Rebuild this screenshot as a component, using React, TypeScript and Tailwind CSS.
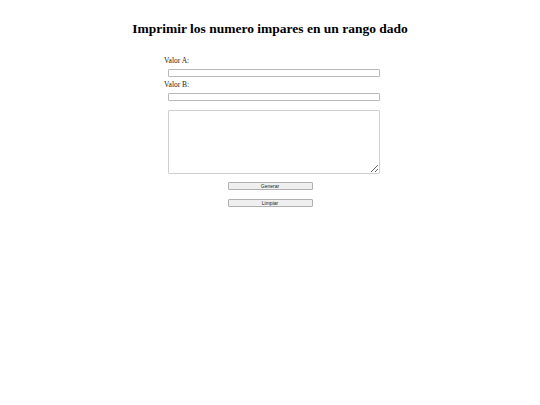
export default function App() {
  return (
    <div className="min-h-screen bg-white text-black font-['Liberation_Serif',serif] flex flex-col items-center">
      <h1 className="mt-[21px] text-[13.5px] leading-[16px] font-bold">
        Imprimir los numero impares en un rango dado
      </h1>

      <form className="mt-[20px] w-[216px] ml-[4px] flex flex-col" onSubmit={(e) => e.preventDefault()}>
        <label className="text-[7.5px] leading-[8px] text-[#222]">Valor A:</label>
        <input
          type="text"
          className="mt-[4px] ml-[4px] w-[212px] h-[8px] border border-[#b8b8b8] rounded-[1px] bg-white outline-none"
        />
        <label className="mt-[4px] text-[7.5px] leading-[8px] text-[#222]">Valor B:</label>
        <input
          type="text"
          className="mt-[4px] ml-[4px] w-[212px] h-[8px] border border-[#b8b8b8] rounded-[1px] bg-white outline-none"
        />
        <textarea className="mt-[9px] ml-[4px] w-[212px] h-[64px] border border-[#d0d0d0] rounded-[1px] bg-white outline-none resize" />
      </form>

      <div className="mt-[8px] flex flex-col items-center gap-[9px]">
        <button className="w-[85px] h-[8px] border border-[#b0b0b0] rounded-[1px] bg-[#efefef] font-['Liberation_Sans',sans-serif] text-[5px] leading-[6px] text-[#222]">
          Generar
        </button>
        <button className="w-[85px] h-[8px] border border-[#b0b0b0] rounded-[1px] bg-[#efefef] font-['Liberation_Sans',sans-serif] text-[5px] leading-[6px] text-[#222]">
          Limpiar
        </button>
      </div>
    </div>
  );
}
